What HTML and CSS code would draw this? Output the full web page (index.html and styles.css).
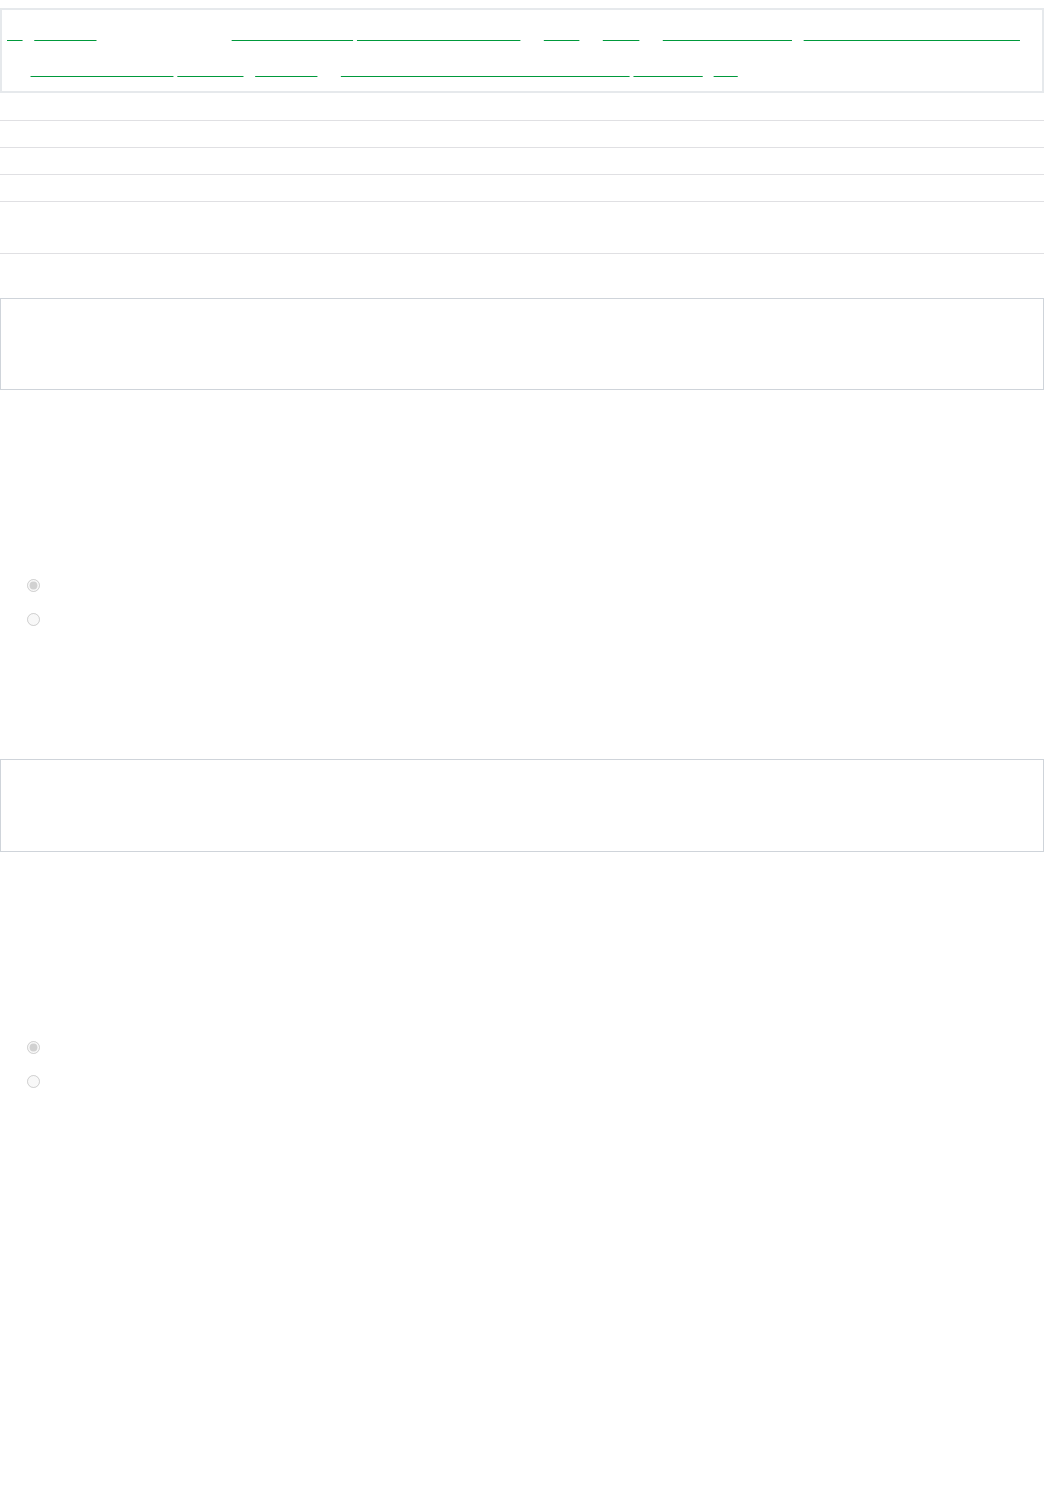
FILE: index.html
```html
<!DOCTYPE html>
<html lang="en">

<head>
    <meta charset="UTF-8">
    <meta name="viewport" content="width=device-width, initial-scale=1.0">
    <title>Survey</title>
    <link rel="stylesheet" href="styles.css">
</head>

<body>
    <div class="topnav">
        <a href="#">Tv</a> / <a href="#">Download</a> <span class="note">Welcome guest user</span> <a href="#">Science and Health</a> <a href="#">Entertainment and Culture</a> <span class="sep">|</span> <a href="#">Video</a> <span class="sep">|</span> <a href="#">Music</a> <span class="sep">|</span> <a href="#">Books and Literature</a> / <a href="#">Community Forums and Questions</a><br>
        <span class="sep lead">|</span> <a href="#">Movie and TV Reviews</a> <a href="#">Newsletter</a> / <a href="#">Education</a> <span class="sep">|</span> <a href="#">Frequently Asked Questions And Help Centers</a> <a href="#">Contact Us</a> / <a href="#">Ads</a>
    </div>

    <div class="rows">
        <div class="row">Survey number 2041</div>
        <div class="row">Published on 12 March</div>
        <div class="row">Category: Reader feedback</div>
        <div class="row">Answers so far: 318</div>
        <div class="row tall">Please read each question and choose the answer that fits you best.<br>Your answers are anonymous.</div>
    </div>

    <div class="question">
        <div class="answer-box">Your comment</div>
        <div class="q-body">
            <h3>Question 1</h3>
            <p>Do you read our newsletter every week?</p>
            <p>Pick one of the answers below.</p>
        </div>
        <div class="options">
            <label class="option"><input type="radio" name="q1" checked disabled> Yes</label>
            <label class="option"><input type="radio" name="q1" disabled> No</label>
        </div>
    </div>

    <div class="question">
        <div class="answer-box">Your comment</div>
        <div class="q-body">
            <h3>Question 2</h3>
            <p>Would you recommend the site to a friend?</p>
            <p>Pick one of the answers below.</p>
        </div>
        <div class="options">
            <label class="option"><input type="radio" name="q2" checked disabled> Yes</label>
            <label class="option"><input type="radio" name="q2" disabled> No</label>
        </div>
    </div>
</body>

</html>
```

FILE: styles.css
```css
body {
    margin: 0;
    font-family: "Liberation Sans", Arial, sans-serif;
    font-size: 14px;
    color: #fff;
    background-color: #fff;
}

.topnav {
    margin-top: 8px;
    margin-bottom: 1px;
    padding: 6px 5px 3px;
    border: 2px solid #e6e9ec;
    line-height: 36px;
    white-space: nowrap;
}

.topnav a {
    color: transparent;
    text-decoration: underline;
    text-decoration-color: #00993b;
    text-decoration-skip-ink: none;
}

.sep {
    margin: 0 6px;
}

.sep.lead {
    margin-left: 8px;
    margin-right: 8px;
}

.row {
    padding: 4px 8px;
    line-height: 18px;
    border-bottom: 1px solid #e0e0e3;
}

.row.tall {
    padding: 7px 8px 8px;
}

.question {
    margin-top: 44px;
}

.question + .question {
    margin-top: 123px;
}

.answer-box {
    height: 92px;
    box-sizing: border-box;
    padding: 10px;
    border: 1px solid #cfd4da;
}

.question + .question .answer-box {
    height: 93px;
}

.q-body {
    padding: 40px 0 30px;
}

.q-body h3 {
    margin: 0;
    font-size: 20px;
    line-height: 28px;
}

.q-body p {
    margin: 16px 0 0;
    line-height: 24px;
}

.option {
    display: flex;
    align-items: center;
    height: 34px;
    padding-left: 27px;
}

.option input {
    margin: 0 8px 0 0;
}
```
